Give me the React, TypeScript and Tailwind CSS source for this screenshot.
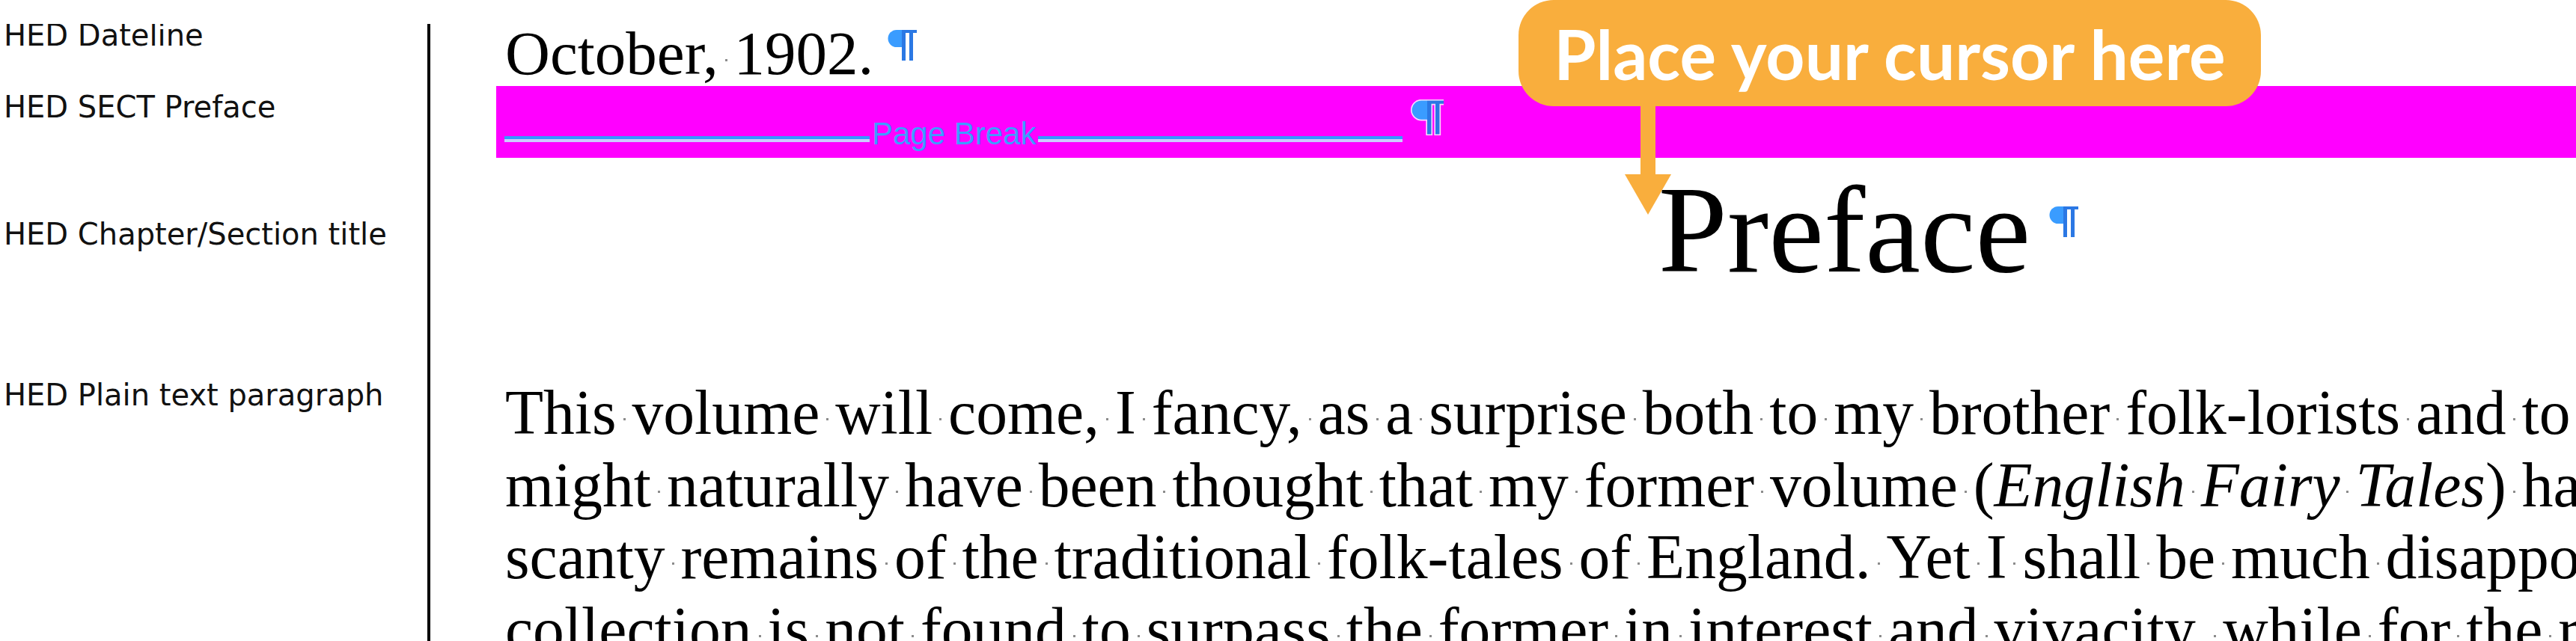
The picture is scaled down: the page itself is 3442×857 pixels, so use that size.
import React from "react";

type Seg = { t: string; i?: boolean };

function Dot() {
  return (
    <span className="inline-block w-[0.25em] text-center">
      <span className="inline-block w-[3px] h-[3px] bg-[#8c8c8c] align-[0.21em]" />
    </span>
  );
}

function Marked({ segs }: { segs: Seg[] }) {
  const out: React.ReactNode[] = [];
  segs.forEach((s, si) => {
    s.t.split(/( )/).forEach((p, pi) => {
      if (p === "") return;
      if (p === " ") out.push(<Dot key={`${si}-${pi}`} />);
      else
        out.push(
          <span key={`${si}-${pi}`} className={s.i ? "italic" : ""}>
            {p}
          </span>
        );
    });
  });
  return <>{out}</>;
}

function Pilcrow({ className = "", halo = false }: { className?: string; halo?: boolean }) {
  return (
    <svg
      className={`inline-block ${className}`}
      width="40"
      height="41"
      viewBox="0 0 40 41"
    >
      {halo && (
        <path
          d="M13 0 H40 V4 H35 V41 H30 V4 H25 V41 H20 V23 H13 A11.5 11.5 0 0 1 13 0 Z"
          fill="none"
          stroke="#ffd6ff"
          strokeWidth="3"
        />
      )}
      <path d="M13 0 H20 V23 H13 A11.5 11.5 0 0 1 13 0 Z" fill="#3a9cff" />
      <path d="M20 0 H40 V4 H35 V41 H30 V4 H25 V41 H20 Z" fill="#2b78e4" />
    </svg>
  );
}

const label = "font-['DejaVu_Sans',sans-serif] text-[40px] leading-[48px] text-[#111] pl-[5px] whitespace-nowrap";
const cell = "w-[575px] shrink-0 border-r-[4px] border-black";

const lines: Seg[][] = [
  [{ t: "This volume will come, I fancy, as a surprise both to my brother folk-lorists and to the general reader. It" }],
  [
    { t: "might naturally have been thought that my former volume (" },
    { t: "English Fairy Tales", i: true },
    { t: ") had exhausted the" },
  ],
  [{ t: "scanty remains of the traditional folk-tales of England. Yet I shall be much disappointed if the present" }],
  [{ t: "collection is not found to surpass the former in interest and vivacity, while for the rarity of its items" }],
];

export default function App() {
  return (
    <div className="relative w-[3442px] h-[857px] overflow-hidden bg-white text-black font-['Liberation_Serif',serif]">
      <div className="h-full pt-[32px] flex flex-col">
        <div className="flex-1 overflow-hidden flex flex-col">
          {/* Dateline */}
          <div className="flex h-[92px] -mt-[9px] shrink-0">
            <div className={cell}>
              <div className={label}>HED Dateline</div>
            </div>
            <div className="flex-1 min-w-0 pl-[88px]">
              <div className="pl-[12px] text-[83px] leading-[96.5px] whitespace-nowrap">
                <Marked segs={[{ t: "October, 1902." }]} />
                <Pilcrow className="ml-[18px] align-[18px]" />
              </div>
            </div>
          </div>

          {/* Page break */}
          <div className="flex h-[96px] shrink-0">
            <div className={`${cell} pt-[4px]`}>
              <div className={label}>HED SECT Preface</div>
            </div>
            <div className="flex-1 min-w-0 pl-[88px]">
              <div className="h-full bg-[#ff00ff] flex items-start pl-[11px]">
                <div className="mt-[67px] w-[488px] h-[8px] flex flex-col">
                  <div className="h-[4px] bg-[#3399ff]" />
                  <div className="h-[4px] bg-[#ccccff]" />
                </div>
                <div className="mt-[40px] mx-[3px] font-['Liberation_Sans',sans-serif] text-[42px] leading-[48px] text-[#3d9cff] whitespace-nowrap">
                  Page Break
                </div>
                <div className="mt-[67px] w-[487px] h-[8px] flex flex-col">
                  <div className="h-[4px] bg-[#3399ff]" />
                  <div className="h-[4px] bg-[#ccccff]" />
                </div>
                <Pilcrow className="mt-[18px] ml-[11px] w-[44px] h-[48px]" halo />
              </div>
            </div>
          </div>

          {/* Chapter title */}
          <div className="flex h-[293px] shrink-0">
            <div className={`${cell} pt-[78px]`}>
              <div className={label}>HED Chapter/Section title</div>
            </div>
            <div className="flex-1 min-w-0 pl-[88px] overflow-hidden">
              <div className="w-[3655px] pl-[12px] pt-[1px] text-center text-[166px] leading-[191px] whitespace-nowrap">
                Preface
                <Pilcrow className="ml-[24px] align-[46px]" />
              </div>
            </div>
          </div>

          {/* Body */}
          <div className="flex flex-1">
            <div className={cell}>
              <div className={label}>HED Plain text paragraph</div>
            </div>
            <div className="flex-1 min-w-0 pl-[88px] overflow-hidden">
              <div className="pl-[12px] text-[83.6px] leading-[96.5px]">
                {lines.map((l, i) => (
                  <div key={i} className="whitespace-nowrap">
                    <Marked segs={l} />
                  </div>
                ))}
              </div>
            </div>
          </div>
        </div>
      </div>

      {/* Callout */}
      <div className="absolute left-[2029px] top-0 w-[992px] h-[142px] rounded-[47px] bg-[#f9ae3d] flex items-center justify-center">
        <span className="font-['Lato',sans-serif] font-bold text-[91px] leading-none text-white whitespace-nowrap">
          Place your cursor here
        </span>
      </div>
      <svg className="absolute left-[2171px] top-[141px]" width="62" height="147" viewBox="0 0 62 147">
        <rect x="21" y="0" width="20" height="93" fill="#f9ae3d" />
        <polygon points="0,92 62,92 31,146" fill="#f9ae3d" />
      </svg>
    </div>
  );
}
